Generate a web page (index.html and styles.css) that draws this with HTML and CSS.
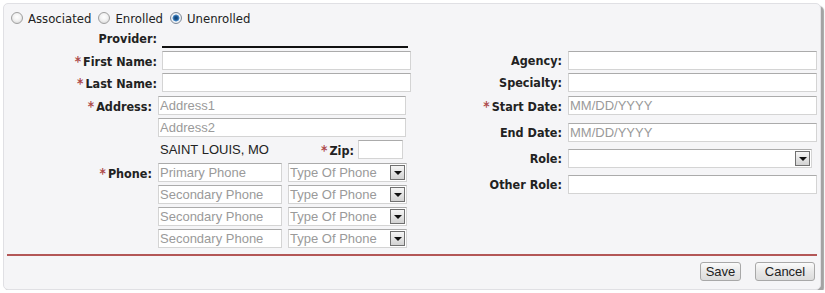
FILE: index.html
```html
<!DOCTYPE html>
<html>
<head>
<meta charset="utf-8">
<link rel="stylesheet" href="styles.css">
</head>
<body>
<div class="panel">
  <div class="radios">
    <label class="opt"><input type="radio" name="kind" class="radio"><span>Associated</span></label>
    <label class="opt"><input type="radio" name="kind" class="radio"><span>Enrolled</span></label>
    <label class="opt"><input type="radio" name="kind" class="radio" checked><span>Unenrolled</span></label>
  </div>
  <div class="form">
    <div class="col-left">
      <div class="row row-provider">
        <span class="lbl">Provider:</span>
        <span class="provider-val"></span>
      </div>
      <div class="group group-names">
        <div class="row">
          <span class="lbl"><span class="req">*</span>First Name:</span>
          <input class="field w-full" type="text">
        </div>
        <div class="row">
          <span class="lbl"><span class="req">*</span>Last Name:</span>
          <input class="field w-full" type="text">
        </div>
      </div>
      <div class="group group-addr">
        <div class="row row-addr">
          <span class="lbl"><span class="req">*</span>Address:</span>
          <input class="field w-addr" type="text" placeholder="Address1">
        </div>
        <div class="row row-addr">
          <span class="lbl"></span>
          <input class="field w-addr" type="text" placeholder="Address2">
        </div>
        <div class="row row-addr">
          <span class="lbl"></span>
          <div class="city-line">
            <span class="city">SAINT LOUIS, MO</span>
            <span class="lbl-inline"><span class="req">*</span>Zip:</span>
            <input class="field w-zip" type="text">
          </div>
        </div>
      </div>
      <div class="group group-phone">
        <div class="row row-addr">
          <span class="lbl"><span class="req">*</span>Phone:</span>
          <div class="phone-line">
            <input class="field w-phone" type="text" placeholder="Primary Phone">
            <span class="select w-ptype"><span class="sel-text">Type Of Phone</span><span class="sel-btn"></span></span>
          </div>
        </div>
        <div class="row row-addr">
          <span class="lbl"></span>
          <div class="phone-line">
            <input class="field w-phone" type="text" placeholder="Secondary Phone">
            <span class="select w-ptype"><span class="sel-text">Type Of Phone</span><span class="sel-btn"></span></span>
          </div>
        </div>
        <div class="row row-addr">
          <span class="lbl"></span>
          <div class="phone-line">
            <input class="field w-phone" type="text" placeholder="Secondary Phone">
            <span class="select w-ptype"><span class="sel-text">Type Of Phone</span><span class="sel-btn"></span></span>
          </div>
        </div>
        <div class="row row-addr">
          <span class="lbl"></span>
          <div class="phone-line">
            <input class="field w-phone" type="text" placeholder="Secondary Phone">
            <span class="select w-ptype"><span class="sel-text">Type Of Phone</span><span class="sel-btn"></span></span>
          </div>
        </div>
      </div>
    </div>
    <div class="col-right">
      <div class="row r-agency">
        <span class="lbl">Agency:</span>
        <input class="field w-full" type="text">
      </div>
      <div class="row r-specialty">
        <span class="lbl">Specialty:</span>
        <input class="field w-full" type="text">
      </div>
      <div class="row r-start">
        <span class="lbl"><span class="req">*</span>Start Date:</span>
        <input class="field w-full" type="text" placeholder="MM/DD/YYYY">
      </div>
      <div class="row r-end">
        <span class="lbl">End Date:</span>
        <input class="field w-full" type="text" placeholder="MM/DD/YYYY">
      </div>
      <div class="row r-role">
        <span class="lbl">Role:</span>
        <span class="select w-role"><span class="sel-text"></span><span class="sel-btn"></span></span>
      </div>
      <div class="row r-other">
        <span class="lbl">Other Role:</span>
        <input class="field w-full" type="text">
      </div>
    </div>
  </div>
  <div class="separator"></div>
  <div class="actions">
    <button class="btn btn-save" type="button">Save</button>
    <button class="btn btn-cancel" type="button">Cancel</button>
  </div>
</div>
</body>
</html>
```

FILE: styles.css
```css
* { box-sizing: border-box; }

html, body {
  margin: 0;
  padding: 0;
  background: #ffffff;
}

body {
  font-family: "DejaVu Sans Condensed", "DejaVu Sans", Verdana, sans-serif;
  font-stretch: condensed;
  color: #222;
}

.panel {
  margin: 3px 0 0 3px;
  width: 818px;
  height: 287px;
  background: #f5f5f7;
  border: 1px solid #e0e0e4;
  border-radius: 5px;
  box-shadow: 3px 3px 1px #a3a3a3;
  padding: 8px 3px 0 3px;
}

/* radio row */
.radios {
  display: flex;
  align-items: center;
  height: 12px;
  padding-left: 4px;
  gap: 7px;
  font-size: 13px;
}

.opt {
  display: flex;
  align-items: center;
  gap: 5px;
  color: #222;
}

.radio {
  appearance: none;
  -webkit-appearance: none;
  margin: 0;
  width: 12px;
  height: 12px;
  border-radius: 50%;
  border: 1px solid #a0a0a0;
  background: radial-gradient(circle at 50% 40%, #ffffff 0, #f2f2f2 45%, #cfcfcf 100%);
}

.radio:checked {
  border-color: #7f8a99;
  background: radial-gradient(circle at 50% 50%, #103d6b 0, #1f5c98 2px, #5e9ad3 3.2px, #f2f5f8 3.8px, #dcdcdc 100%);
}

/* form layout */
.form {
  display: flex;
  justify-content: space-between;
  margin-top: 8px;
}

.col-left {
  width: 404px;
  display: flex;
  flex-direction: column;
}

.col-right {
  width: 355px;
  display: flex;
  flex-direction: column;
  padding-top: 19px;
}

.group {
  display: flex;
  flex-direction: column;
  gap: 3px;
}

.group-names { margin-top: 3px; }
.group-addr { margin-top: 4px; }
.group-phone { margin-top: 4px; }

.row {
  display: flex;
  align-items: center;
  gap: 5px;
  height: 19px;
}

.lbl {
  width: 150px;
  flex: none;
  text-align: right;
  font-weight: bold;
  font-size: 12.5px;
  color: #222;
  white-space: nowrap;
}

.row-addr { gap: 6px; }
.row-addr .lbl { width: 145px; }

.row-provider { height: 16px; align-items: flex-start; }
.row-provider .lbl { line-height: 14px; }

.provider-val {
  width: 246px;
  height: 16px;
  border-bottom: 2px solid #111;
}

.req {
  color: #ad4a4a;
  margin-right: 2px;
  font-size: 13.5px;
}

.col-right .row { gap: 6px; }
.col-right .lbl { width: 100px; }

.r-specialty { margin-top: 3px; }
.r-start { margin-top: 4px; }
.r-end { margin-top: 8px; }
.r-role { margin-top: 7px; }
.r-other { margin-top: 7px; }

/* inputs */
.field {
  height: 19px;
  margin: 0;
  border: 1px solid #d4d4d4;
  border-top-color: #ababab;
  background: #fff;
  padding: 0 1px;
  font-family: "Liberation Sans", Arial, sans-serif;
  font-stretch: normal;
  font-size: 13px;
  color: #222;
  outline: none;
}

.field::placeholder { color: #9a9a9a; }

.w-full { width: 249px; }
.w-addr { width: 248px; }
.w-zip { width: 45px; margin-right: 3px; }
.w-phone { width: 124px; }

.city-line {
  width: 248px;
  display: flex;
  align-items: center;
}

.city {
  flex: 1;
  padding-left: 2px;
  font-family: "Liberation Sans", Arial, sans-serif;
  font-stretch: normal;
  font-size: 13px;
  color: #222;
}

.lbl-inline {
  font-weight: bold;
  font-size: 12.5px;
  color: #222;
  margin-right: 4px;
}

.phone-line {
  display: flex;
  align-items: center;
  gap: 6px;
}

/* select */
.select {
  height: 19px;
  display: flex;
  align-items: center;
  justify-content: space-between;
  border: 1px solid #d4d4d4;
  border-top-color: #ababab;
  background: #fff;
  padding: 0 1px 0 1px;
  font-family: "Liberation Sans", Arial, sans-serif;
  font-stretch: normal;
  font-size: 13px;
  color: #9a9a9a;
}

.w-ptype { width: 119px; }
.w-role { width: 244px; }

.sel-text { white-space: nowrap; }

.sel-btn {
  width: 15px;
  height: 15px;
  flex: none;
  border: 1px solid #707070;
  background: linear-gradient(#f6f6f6, #d2d2d2);
  display: flex;
  align-items: center;
  justify-content: center;
}

.sel-btn::after {
  content: "";
  width: 0;
  height: 0;
  border-left: 4px solid transparent;
  border-right: 4px solid transparent;
  border-top: 4px solid #111;
  margin-top: 1px;
}

/* footer */
.separator {
  margin-top: 6px;
  height: 2px;
  background: #b35757;
}

.actions {
  display: flex;
  justify-content: flex-end;
  gap: 14px;
  margin-top: 6px;
  padding-right: 2px;
}

.btn {
  height: 19px;
  margin: 0;
  padding: 0;
  border: 1px solid #a8a8a8;
  border-radius: 3px;
  background: linear-gradient(#fbfbfb, #e8e8e8 50%, #dcdcdc);
  font-family: "Liberation Sans", Arial, sans-serif;
  font-stretch: normal;
  font-size: 13px;
  color: #222;
}

.btn-save { width: 41px; }
.btn-cancel { width: 60px; }
```
